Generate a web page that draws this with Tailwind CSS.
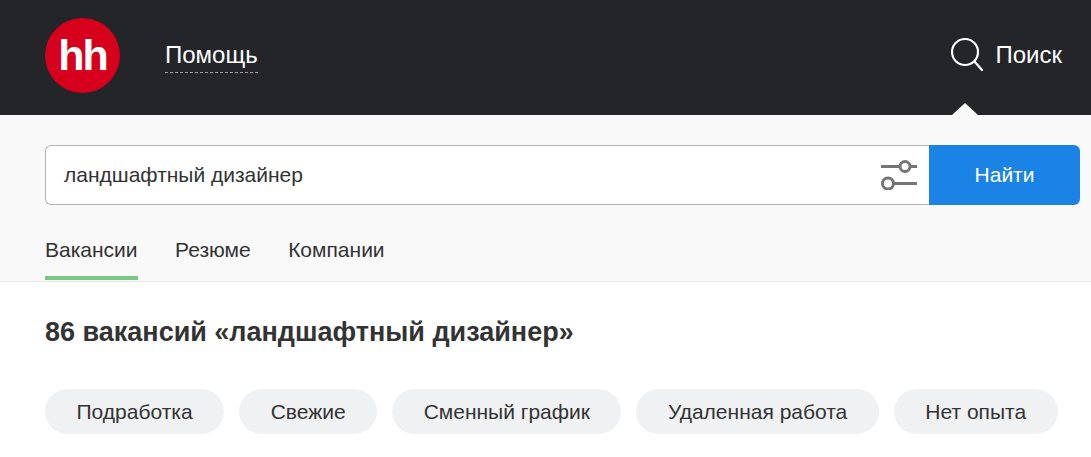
<!DOCTYPE html>
<html>
<head>
<meta charset="utf-8">
<script src="https://cdn.jsdelivr.net/npm/@tailwindcss/browser@4"></script>
</head>
<body class="bg-white font-['Liberation_Sans',Arial,sans-serif] text-[#333333]">
<div class="w-[1091px] h-[457px] overflow-hidden">
  <header class="relative h-[115px] bg-[#232529] flex items-start pl-[45px] pr-[29px]">
    <div class="mt-[18px] w-[75px] h-[75px] rounded-full bg-[#d6001c] flex items-center justify-center">
      <span class="text-white font-bold text-[43px] leading-none tracking-[-2px]">hh</span>
    </div>
    <a class="ml-[45px] mt-[41px] h-[32px] text-white text-[24px] leading-[28px] border-b border-dashed border-[#a0a0a0]">Помощь</a>
    <div class="ml-auto mt-[38px] flex items-center gap-[12px]">
      <svg width="32" height="34" viewBox="0 0 32 34" fill="none" stroke="white" stroke-width="2.2" stroke-linecap="round"><circle cx="14" cy="14" r="13"/><path d="M23.5 23.5L31 32"/></svg>
      <span class="text-white text-[24px] leading-[34px]">Поиск</span>
    </div>
    <div class="absolute right-[113px] bottom-0 w-0 h-0 border-l-[13px] border-r-[13px] border-b-[12px] border-l-transparent border-r-transparent border-b-[#f9f9f9]"></div>
  </header>
  <section class="h-[167px] bg-[#f9f9f9] border-b border-[#e7e7e7] pl-[45px] pr-[11px] pt-[30px]">
    <div class="flex h-[60px]">
      <div class="flex-1 flex items-center justify-between bg-white border border-r-0 border-[#b3b3b3] rounded-l-[6px] pl-[18px] pr-[12px]">
        <span class="text-[21px] text-[#333333]">ландшафтный дизайнер</span>
        <svg width="36" height="30" viewBox="0 0 36 30" fill="none" stroke="#757575" stroke-width="3"><path d="M0 6.5H19M29 6.5H36"/><circle cx="24" cy="6.5" r="5"/><path d="M12 23.5H36"/><circle cx="7" cy="23.5" r="5.5"/></svg>
      </div>
      <button class="w-[151px] bg-[#1a83e5] text-white text-[21px] rounded-r-[6px]">Найти</button>
    </div>
    <nav class="flex gap-[37.5px] mt-[29px] text-[21px] leading-[32px]">
      <a class="h-[46px] border-b-4 border-[#78c87f]">Вакансии</a>
      <a>Резюме</a>
      <a>Компании</a>
    </nav>
  </section>
  <main class="pl-[45px]">
    <h1 class="mt-[34px] text-[27px] leading-[32px] font-bold text-[#333333]">86 вакансий «ландшафтный дизайнер»</h1>
    <div class="flex gap-[15px] mt-[41px] text-[21px] text-[#333333]">
      <span class="h-[45px] leading-[45px] px-[31.5px] rounded-full bg-[#eff1f3]">Подработка</span>
      <span class="h-[45px] leading-[45px] px-[31.5px] rounded-full bg-[#eff1f3]">Свежие</span>
      <span class="h-[45px] leading-[45px] px-[31.5px] rounded-full bg-[#eff1f3]">Сменный график</span>
      <span class="h-[45px] leading-[45px] px-[31.5px] rounded-full bg-[#eff1f3]">Удаленная работа</span>
      <span class="h-[45px] leading-[45px] px-[31.5px] rounded-full bg-[#eff1f3]">Нет опыта</span>
    </div>
  </main>
</div>
</body>
</html>
